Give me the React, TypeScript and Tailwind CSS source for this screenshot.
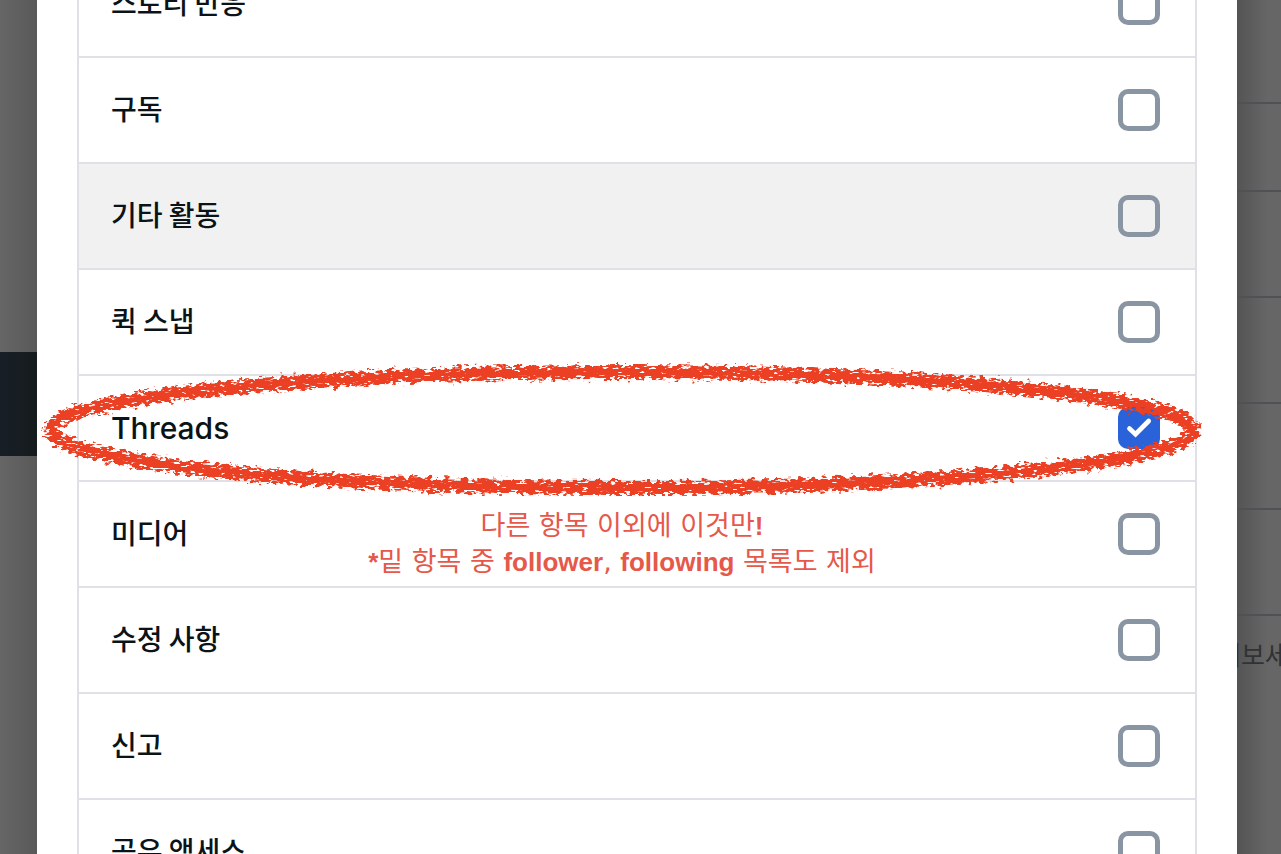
import React from 'react';
import clsx from 'clsx';

interface ActivityItem {
  id: string;
  label: string;
  checked?: boolean;
  highlighted?: boolean;
}

const items: ActivityItem[] = [
  { id: 'story-reactions', label: '스토리 반응' },
  { id: 'subscriptions', label: '구독' },
  { id: 'other-activity', label: '기타 활동', highlighted: true },
  { id: 'quick-snap', label: '퀵 스냅' },
  { id: 'threads', label: 'Threads', checked: true },
  { id: 'media', label: '미디어' },
  { id: 'edits', label: '수정 사항' },
  { id: 'reports', label: '신고' },
  { id: 'shared-access', label: '공유 액세스' },
];

// Crayon ring, overlaps the rows above and below
const CrayonRing = () => (
  <svg
    className="pointer-events-none absolute -left-10 -right-3 -top-4 h-[136px] w-[calc(100%+52px)]"
    viewBox="0 0 1168 136"
    preserveAspectRatio="none"
    fill="none"
    aria-hidden="true"
  >
    <defs>
      <filter id="crayon" x="0" y="0" width="1168" height="136" filterUnits="userSpaceOnUse" colorInterpolationFilters="sRGB">
        <feTurbulence type="fractalNoise" baseFrequency="0.17 0.28" numOctaves="2" seed="7" result="rough" />
        <feDisplacementMap in="SourceGraphic" in2="rough" scale="12" xChannelSelector="R" yChannelSelector="G" result="edge" />
        <feTurbulence type="fractalNoise" baseFrequency="0.14 0.4" numOctaves="2" seed="21" />
        <feColorMatrix type="matrix" values="0 0 0 0 0  0 0 0 0 0  0 0 0 0 0  14 0 0 0 -4.6" result="grain" />
        <feComposite in="edge" in2="grain" operator="in" result="body" />
        <feMorphology in="SourceGraphic" operator="erode" radius="4" result="core" />
        <feTurbulence type="fractalNoise" baseFrequency="0.12 0.3" numOctaves="2" seed="4" />
        <feColorMatrix type="matrix" values="0 0 0 0 0  0 0 0 0 0  0 0 0 0 0  16 0 0 0 -6" result="wax" />
        <feComposite in="core" in2="wax" operator="in" result="fill" />
        <feMerge>
          <feMergeNode in="body" />
          <feMergeNode in="fill" />
        </feMerge>
      </filter>
    </defs>
    <ellipse cx="583" cy="70" rx="571" ry="58" stroke="#eb4024" strokeWidth="14" filter="url(#crayon)" />
  </svg>
);

const Note = () => (
  <p className="pointer-events-none absolute inset-x-0 top-[26px] whitespace-nowrap pr-[30px] text-center font-['DejaVu_Sans','Noto_Sans_CJK_KR',sans-serif] text-[27px] font-normal leading-9 text-[#e5584a]">
    다른 항목 이외에 이것만<b className="font-['Liberation_Sans',sans-serif] text-[26px] font-bold">!</b>
    <br />
    <b className="font-['Liberation_Sans',sans-serif] text-[26px] font-bold">*</b>밑 항목 중{' '}
    <b className="font-['Liberation_Sans',sans-serif] text-[26px] font-bold">follower</b>,{' '}
    <b className="font-['Liberation_Sans',sans-serif] text-[26px] font-bold">following</b> 목록도 제외
  </p>
);

const App: React.FC = () => {
  const [selected, setSelected] = React.useState<string[]>(
    items.filter(i => i.checked).map(i => i.id)
  );

  const toggle = (id: string) => {
    setSelected(prev => (prev.includes(id) ? prev.filter(s => s !== id) : [...prev, id]));
  };

  return (
    <div className="flex h-screen overflow-hidden bg-[#656565] font-['Noto_Sans_CJK_KR',sans-serif]">
      {/* Page behind the dialog, left edge */}
      <div className="flex w-[37px] shrink-0 flex-col bg-linear-to-r from-[#666666] to-[#595959]">
        <div className="mt-[352px] h-[104px] bg-linear-to-r from-[#171e25] to-[#161b1d]" />
      </div>

      <main className="flex min-w-0 flex-1 flex-col justify-center bg-white px-10 pt-1">
        <ul className="border-x-2 border-[#e0e1e6]">
          {items.map(item => {
            const isChecked = selected.includes(item.id);
            return (
              <li
                key={item.id}
                className={clsx(
                  'relative h-[106px] border-b-2 border-[#e0e1e6]',
                  item.highlighted && 'bg-[#f1f1f1]',
                  item.id === 'threads' && 'z-10'
                )}
              >
                <label htmlFor={item.id} className="flex h-full cursor-pointer items-center justify-between pl-8 pr-[35px]">
                  <span
                    className={clsx(
                      'text-[#0a1317]',
                      item.id === 'threads'
                        ? "font-['Inter',sans-serif] text-[30px] font-medium"
                        : 'pb-1 text-[28px] font-medium'
                    )}
                  >
                    {item.label}
                  </span>
                  <span className="relative size-[42px]">
                    <input
                      id={item.id}
                      type="checkbox"
                      checked={isChecked}
                      onChange={() => toggle(item.id)}
                      className="block size-[42px] appearance-none rounded-[10px] border-[5px] border-[#8a95a3] checked:border-[#2a63d9] checked:bg-[#2a63d9]"
                    />
                    {isChecked && (
                      <svg className="pointer-events-none absolute inset-0" viewBox="0 0 42 42" fill="none" aria-hidden="true">
                        <path d="M11.4 21.5 17.5 27.2 30.7 14" stroke="#fff" strokeWidth="4.6" strokeLinecap="round" />
                      </svg>
                    )}
                  </span>
                </label>
                {item.id === 'threads' && <CrayonRing />}
                {item.id === 'media' && <Note />}
              </li>
            );
          })}
        </ul>
      </main>

      {/* Page behind the dialog, right edge */}
      <div className="w-11 shrink-0 overflow-hidden bg-linear-to-r from-[#545454] to-[#666666] to-70%">
        <div className="h-[104px] border-b-2 border-[#505155]" />
        <div className="h-[88px] border-b-2 border-[#505155]" />
        <div className="h-[106px] border-b-2 border-[#505155]" />
        <div className="h-[106px] border-b-2 border-[#505155]" />
        <div className="h-[106px] border-b-2 border-[#505155]" />
        <div className="h-[106px] border-b-2 border-[#505155]" />
        <p className="-ml-5 mt-[22px] whitespace-nowrap text-[26px] leading-8 text-[#303336]">해보세요</p>
      </div>
    </div>
  );
};

export default App;
